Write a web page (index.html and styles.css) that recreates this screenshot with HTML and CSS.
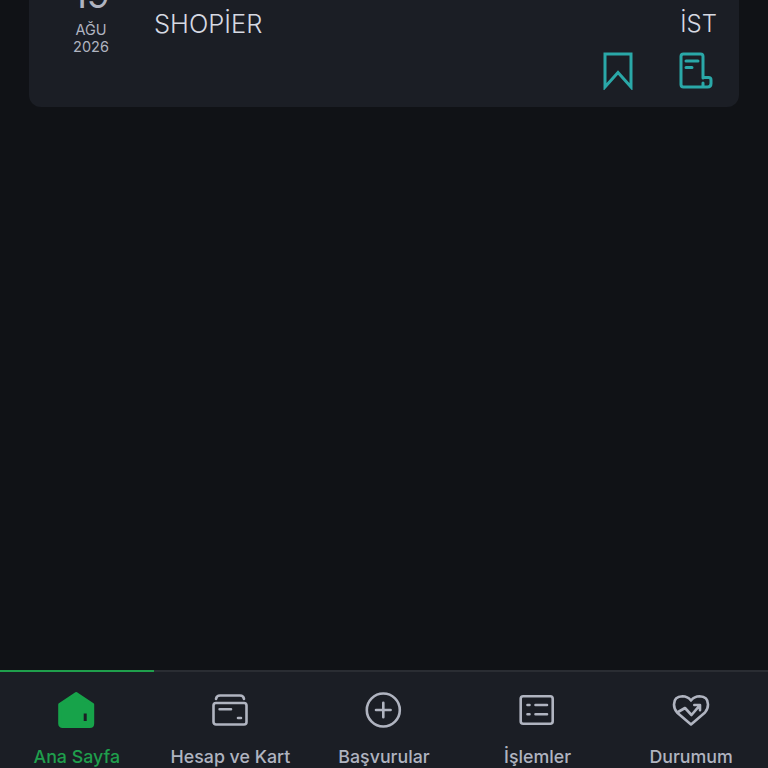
FILE: index.html
```html
<!DOCTYPE html>
<html lang="tr">
<head>
    <meta charset="UTF-8">
    <meta name="viewport" content="width=device-width, initial-scale=1.0">
    <title>Ana Sayfa</title>
    <link rel="stylesheet" href="styles.css">
</head>
<body>
    <main class="content">
        <div class="tx-card">
            <div class="tx-date">
                <span class="tx-day">19</span>
                <span>AĞU</span>
                <span>2026</span>
            </div>
            <div class="tx-body">
                <div class="tx-row">
                    <span>SHOPİER</span>
                    <span class="tx-city">İST</span>
                </div>
                <div class="tx-actions">
                    <!-- bookmark -->
                    <svg class="tx-icon tx-bookmark" width="30" height="38" viewBox="0 0 30 38">
                        <path d="M2 2H28V35L15 20.500L2 35Z"/>
                    </svg>
                    <!-- receipt -->
                    <svg class="tx-icon" width="34" height="38" viewBox="0 0 34 38">
                        <path d="M24 26V4.500Q24 2 21.500 2H4.500Q2 2 2 4.500V32.500Q2 35 4.500 35H28.500Q32 35 32 31.500V28Q32 25.500 29.500 25.500H24M24 31V35"/>
                        <path d="M7 9H19M7 15.500H13"/>
                    </svg>
                </div>
            </div>
        </div>
    </main>

    <nav class="tab-bar">
        <a class="tab tab-active" href="#">
            <svg width="38" height="38" viewBox="0 0 38 38">
                <path class="home-fill" d="M18.200 2.500L34.700 13.500V32.500Q34.700 35.500 31.700 35.500H4.700Q1.700 35.500 1.700 32.500V13.500Z"/>
                <path class="home-door" d="M27.200 22.500V30"/>
            </svg>
            <span>Ana Sayfa</span>
        </a>
        <a class="tab" href="#">
            <svg width="38" height="38" viewBox="0 0 38 38">
                <path d="M5 8Q5.500 4.500 9 4.500H29Q32.500 4.500 33 8"/>
                <rect x="2.500" y="12" width="33" height="21.500" rx="2.500"/>
                <path d="M8.600 18.300H20M27 27H30"/>
            </svg>
            <span>Hesap ve Kart</span>
        </a>
        <a class="tab" href="#">
            <svg width="38" height="38" viewBox="0 0 38 38">
                <circle cx="18.300" cy="19" r="16.500"/>
                <path d="M18.300 11.700V26.300M11 19H25.600"/>
            </svg>
            <span>Başvurular</span>
        </a>
        <a class="tab" href="#">
            <svg width="38" height="38" viewBox="0 0 38 38">
                <rect x="1.700" y="5.300" width="32" height="27.400" rx="2.500"/>
                <path d="M8.500 14H10.500M16.500 14H28M8.500 23.300H10.500M16.500 23.300H28"/>
            </svg>
            <span>İşlemler</span>
        </a>
        <a class="tab" href="#">
            <svg width="38" height="38" viewBox="0 0 38 38">
                <path d="M19 33.500L5 21.500Q2 18 2 13.500Q2 5.500 10.500 5.300Q15.500 5.300 19 9.500Q22.500 5.300 27.500 5.300Q36 5.500 36 13.500Q36 18 33 21.500Z"/>
                <path d="M6 21L13 17L19.500 24L27.500 14.700M22.300 14H28V19.300"/>
            </svg>
            <span>Durumum</span>
        </a>
    </nav>
</body>
</html>
```

FILE: styles.css
```css
* {
    margin: 0;
    padding: 0;
    box-sizing: border-box;
    font-family: 'Inter', 'Liberation Sans', sans-serif;
}

body {
    display: flex;
    flex-direction: column;
    height: 100vh;
    overflow: hidden;
    background-color: #101216;
}

.content {
    flex: 1;
    min-height: 0;
    padding: 0 29px;
    overflow: hidden;
}

/* The card is scrolled partly off the top of the list */
.tx-card {
    display: flex;
    height: 147px;
    margin-top: -40px;
    padding: 0 22px 0 24px;
    background-color: #1b1e25;
    border-radius: 12px;
}

.tx-date {
    display: flex;
    flex-direction: column;
    align-items: center;
    width: 76px;
    color: #b0b4c0;
    font-size: 14.500px;
    line-height: 17px;
}

.tx-day {
    margin-top: 11px;
    margin-bottom: 3px;
    font-size: 37px;
    line-height: 47px;
}

.tx-body {
    display: flex;
    flex-direction: column;
    flex: 1;
    padding-left: 25px;
}

.tx-row {
    display: flex;
    justify-content: space-between;
    margin-top: 49px;
    font-size: 25.500px;
    font-weight: 300;
    line-height: 30px;
    color: #d6d9e2;
}

.tx-city {
    font-size: 24px;
}

.tx-actions {
    display: flex;
    justify-content: flex-end;
    gap: 46px;
    margin-top: 13px;
    margin-right: 4px;
}

.tx-icon {
    fill: none;
    stroke: #2aa8a8;
    stroke-width: 3;
    stroke-linejoin: round;
    stroke-linecap: round;
}

.tx-bookmark {
    stroke-linejoin: miter;
}

.tab-bar {
    display: flex;
    height: 98px;
    background-color: #1b1e25;
    border-top: 2px solid #2a2d33;
}

.tab {
    position: relative;
    display: flex;
    flex-direction: column;
    align-items: center;
    flex: 1;
    padding-top: 19px;
    gap: 17px;
    color: #b0b4c0;
    font-size: 17.800px;
    font-weight: 500;
    line-height: 22px;
    white-space: nowrap;
    text-decoration: none;
}

.tab svg {
    fill: none;
    stroke: #b0b4c0;
    stroke-width: 2.600;
    stroke-linecap: round;
    stroke-linejoin: round;
}

.tab-active {
    color: #1f9f4c;
}

/* Green marker over the top border */
.tab-active::before {
    content: "";
    position: absolute;
    top: -2px;
    left: 0;
    right: 0;
    height: 2px;
    background-color: #1f9f4c;
}

.tab svg .home-fill {
    fill: #17a34a;
    stroke: #17a34a;
    stroke-width: 3;
}

.tab svg .home-door {
    stroke: #1b1e25;
    stroke-width: 3;
    stroke-linecap: butt;
}
```
